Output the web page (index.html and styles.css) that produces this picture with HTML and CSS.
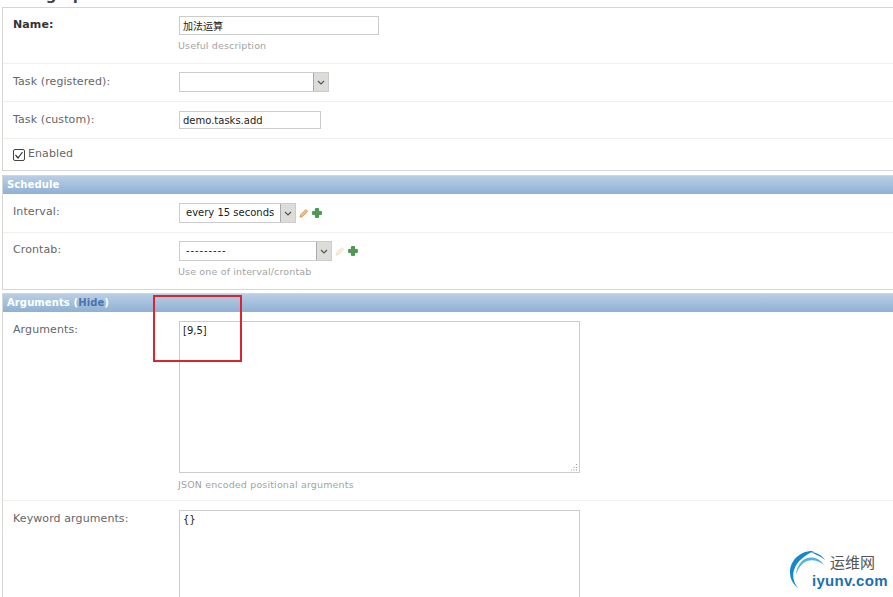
FILE: index.html
```html
<!DOCTYPE html>
<html lang="zh">
<head>
<meta charset="utf-8">
<title>Change periodic task</title>
<link rel="stylesheet" href="styles.css">
</head>
<body>
<main class="page">
  <h1 class="title">Change periodic task</h1>
  <section class="group first">
    <div class="row name-row">
      <label class="label strong">Name:</label>
      <div class="field">
        <input class="input name-input" value="加法运算">
        <p class="help">Useful description</p>
      </div>
    </div>
    <div class="row reg-row">
      <label class="label">Task (registered):</label>
      <div class="field">
        <div class="select reg-select"><span class="select-text"></span><span class="arrow"><svg viewBox="0 0 8 5" width="8" height="5"><path d="M1 1l3 3 3-3" fill="none" stroke="#555" stroke-width="1.2"/></svg></span></div>
      </div>
    </div>
    <div class="row custom-row">
      <label class="label">Task (custom):</label>
      <div class="field"><input class="input custom-input" value="demo.tasks.add"></div>
    </div>
    <div class="row enabled-row">
      <span class="check"><svg viewBox="0 0 12 12" width="12" height="12"><rect x=".5" y=".5" width="11" height="11" rx="1.5" fill="#fff" stroke="#444"/><path d="M2.5 6l2.5 3 4.5-6" fill="none" stroke="#333" stroke-width="1.2"/></svg></span>
      <span class="label-inline">Enabled</span>
    </div>
  </section>

  <section class="group second">
    <h2 class="bar">Schedule</h2>
    <div class="row interval-row">
      <label class="label">Interval:</label>
      <div class="field">
        <div class="select-line">
          <div class="select int-select"><span class="select-text">every 15 seconds</span><span class="arrow"><svg viewBox="0 0 8 5" width="8" height="5"><path d="M1 1l3 3 3-3" fill="none" stroke="#555" stroke-width="1.2"/></svg></span></div>
          <svg class="pencil" viewBox="0 0 10 10" width="10" height="10"><path d="M1 9.2l.8-2.6 5-5 1.8 1.8-5 5z" fill="#f0c48a" stroke="#c98a4a" stroke-width=".8"/></svg>
          <svg class="plus" viewBox="0 0 10 10" width="10" height="10"><path d="M3.4.6h3.2v2.8h2.8v3.2H6.6v2.8H3.4V6.6H.6V3.4h2.8z" fill="#4f9a4f" stroke="#2f7a3a" stroke-width=".7"/></svg>
        </div>
      </div>
    </div>
    <div class="row cron-row">
      <label class="label">Crontab:</label>
      <div class="field">
        <div class="select-line">
          <div class="select cron-select"><span class="select-text dashes">---------</span><span class="arrow"><svg viewBox="0 0 8 5" width="8" height="5"><path d="M1 1l3 3 3-3" fill="none" stroke="#555" stroke-width="1.2"/></svg></span></div>
          <svg class="pencil faded" viewBox="0 0 10 10" width="10" height="10"><path d="M1 9.2l.8-2.6 5-5 1.8 1.8-5 5z" fill="#f0c48a" stroke="#c98a4a" stroke-width=".8"/></svg>
          <svg class="plus" viewBox="0 0 10 10" width="10" height="10"><path d="M3.4.6h3.2v2.8h2.8v3.2H6.6v2.8H3.4V6.6H.6V3.4h2.8z" fill="#4f9a4f" stroke="#2f7a3a" stroke-width=".7"/></svg>
        </div>
        <p class="help cron-help">Use one of interval/crontab</p>
      </div>
    </div>
  </section>

  <section class="group last">
    <h2 class="bar">Arguments (<a class="hide">Hide</a>)</h2>
    <div class="row args-row">
      <label class="label area-label">Arguments:</label>
      <div class="field">
        <div class="area-wrap">
          <textarea class="area">[9,5]</textarea>
          <svg class="grip" viewBox="0 0 8 8" width="8" height="8"><path d="M6 1h1v1H6zM3.500 4h1v1h-1zM6 4h1v1H6zM1 6.500h1v1H1zM3.500 6.500h1v1h-1zM6 6.500h1v1H6z" fill="#999"/></svg>
        </div>
        <p class="help area-help">JSON encoded positional arguments</p>
      </div>
    </div>
    <div class="row kw-row">
      <label class="label area-label">Keyword arguments:</label>
      <div class="field"><div class="area-wrap"><textarea class="area">{}</textarea></div></div>
    </div>
  </section>
</main>

<div class="redbox"></div>

<div class="logo">
  <svg class="logo-arc" viewBox="0 0 44 44" width="44" height="44">
    <path d="M26 2C12 1 2 12 2 23c0 7 3 12 8 16-4-5-6-11-4-18C9 12 17 6 26 2z" fill="#1488cc"/>
    <path d="M36 16C31 8 21 6 14 12 10 16 8 21 8 26c2-7 6-12 11-14 6-2 12 0 17 4z" fill="#4fb0e2"/>
    <path d="M22 3c6 0 12 3 15 8-5-4-10-6-15-8z" fill="#1488cc"/>
  </svg>
  <span class="logo-cn">运维网</span>
  <span class="logo-en">iyunv.com</span>
</div>
</body>
</html>
```

FILE: styles.css
```css
html, body {
  margin: 0;
  padding: 0;
  height: 597px;
  overflow: hidden;
  background: #fff;
  font-family: "DejaVu Sans", Verdana, "Noto Sans CJK SC", sans-serif;
  font-size: 11px;
  color: #666;
}
.page {
  margin-left: 2px;
  height: 597px;
  overflow: hidden;
}
.title {
  margin: -14px 0 3px 0;
  height: 18px;
  line-height: 18px;
  font-size: 15px;
  font-weight: bold;
  letter-spacing: .3px;
  color: #444;
}
.group {
  border: 1px solid #d6d6d2;
  border-right: 0;
}
.first { margin-bottom: 4px; }
.second { margin-bottom: 3px; }
.last { border-bottom: 0; }
.bar {
  margin: 0;
  height: 18px;
  line-height: 17px;
  padding-left: 4px;
  font-size: 10px;
  font-weight: bold;
  letter-spacing: .1px;
  color: #fff;
  background: linear-gradient(#b9cee5, #8fb1d4);
}
.hide { color: #4a74ab; }
.row {
  display: flex;
  box-sizing: border-box;
  padding-left: 10px;
  border-bottom: 1px solid #efefeb;
}
.row:last-child { border-bottom: 0; }
.label {
  width: 166px;
  flex: none;
  line-height: 14px;
  letter-spacing: .1px;
}
.area-label { margin-top: 2px; }
.strong { font-weight: bold; color: #333; }
.field { flex: 1; min-width: 0; }
.name-row { height: 56px; padding-top: 10px; }
.reg-row { height: 38px; padding-top: 11px; }
.custom-row { height: 37px; padding-top: 11px; }
.enabled-row { height: 31px; padding-top: 8px; align-items: flex-start; }
.interval-row { height: 39px; padding-top: 11px; }
.cron-row { height: 56px; padding-top: 10px; }
.args-row { height: 189px; padding-top: 9px; }
.kw-row { height: 120px; padding-top: 9px; }

.input {
  display: block;
  box-sizing: border-box;
  height: 19px;
  margin: -2px 0 0 0;
  padding: 0 3px;
  border: 1px solid #ccc;
  font: 10px "DejaVu Sans", "Noto Sans CJK SC", sans-serif;
  color: #222;
  background: #fff;
  outline: 0;
}
.name-input { width: 200px; }
.custom-input { width: 142px; height: 18px; }
.help {
  margin: 5px 0 0 -1px;
  font-size: 9.5px;
  line-height: 12px;
  color: #a3a3a3;
  letter-spacing: .15px;
}
.area-help { margin-top: 6px; }
.select-line {
  display: flex;
  align-items: center;
  margin-top: -2px;
  gap: 3px;
}
.select {
  display: flex;
  box-sizing: border-box;
  height: 20px;
  border: 1px solid #ccc;
  background: #fff;
  color: #222;
  flex: none;
}
.reg-select { width: 150px; margin-top: -3px; }
.int-select { width: 117px; }
.cron-select { width: 153px; }
.select-text {
  flex: 1;
  padding-left: 6px;
  font-size: 10px;
  line-height: 18px;
  white-space: nowrap;
  overflow: hidden;
}
.dashes { letter-spacing: .9px; }
.arrow {
  flex: none;
  width: 14px;
  display: flex;
  align-items: center;
  justify-content: center;
  background: #dcdcd8;
  border-left: 1px solid #aaa;
}
.check { display: block; margin-right: 3px; margin-top: 2px; height: 12px; }
.label-inline { line-height: 14px; letter-spacing: .1px; }
.faded { opacity: .3; }
.area-wrap { position: relative; width: 401px; }
.area {
  display: block;
  box-sizing: border-box;
  width: 401px;
  height: 152px;
  margin: 0;
  padding: 3px;
  border: 1px solid #ccc;
  font: 10px "DejaVu Sans", sans-serif;
  color: #222;
  background: #fff;
  outline: 0;
  resize: none;
}
.grip { position: absolute; right: 2px; bottom: 2px; }
.redbox {
  position: absolute;
  left: 153px;
  top: 295px;
  width: 85px;
  height: 63px;
  border: 2px solid #dc2430;
}
.logo {
  position: absolute;
  left: 788px;
  top: 549px;
  width: 105px;
  height: 44px;
}
.logo-arc { position: absolute; left: 0; top: 0; }
.logo-cn {
  position: absolute;
  left: 42px;
  top: 4px;
  font: 15px/18px "Noto Sans CJK SC", sans-serif;
  color: #555;
}
.logo-en {
  position: absolute;
  left: 24px;
  top: 23px;
  font: bold 15px/18px "Liberation Sans", sans-serif;
  color: #1d6fb0;
  letter-spacing: .3px;
}
```
